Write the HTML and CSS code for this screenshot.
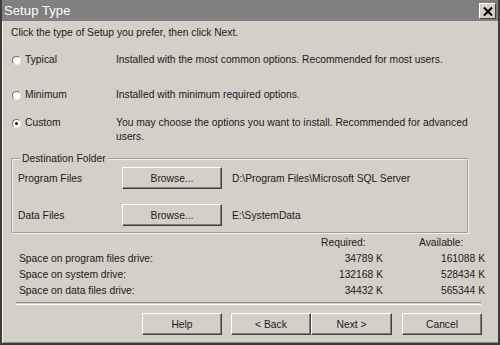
FILE: index.html
```html
<!DOCTYPE html>
<html>
<head>
<meta charset="utf-8">
<link rel="stylesheet" href="styles.css">
</head>
<body>
<div class="window">
  <div class="titlebar">
    <span class="title">Setup Type</span>
    <span class="close"><svg width="10" height="9" viewBox="0 0 10 9"><path d="M1 0.5 L9 8.5 M9 0.5 L1 8.5" stroke="#000" stroke-width="2" fill="none"/></svg></span>
  </div>
  <div class="content">
    <p class="intro">Click the type of Setup you prefer, then click Next.</p>
    <div class="options">
      <div class="opt opt-typical"><span class="radio"></span><span>Typical</span></div>
      <div class="desc opt-typical">Installed with the most common options. Recommended for most users.</div>
      <div class="opt opt-minimum"><span class="radio"></span><span>Minimum</span></div>
      <div class="desc opt-minimum">Installed with minimum required options.</div>
      <div class="opt opt-custom"><span class="radio checked"></span><span>Custom</span></div>
      <div class="desc opt-custom">You may choose the options you want to install. Recommended for advanced users.</div>
    </div>
    <fieldset class="group">
      <legend>Destination Folder</legend>
      <div class="folder-row">
        <span class="flabel">Program Files</span>
        <button class="btn browse">Browse...</button>
        <span class="path">D:\Program Files\Microsoft SQL Server</span>
      </div>
      <div class="folder-row second">
        <span class="flabel">Data Files</span>
        <button class="btn browse">Browse...</button>
        <span class="path">E:\SystemData</span>
      </div>
    </fieldset>
    <div class="space">
      <span></span><span class="hdr">Required:</span><span class="hdr">Available:</span>
      <span>Space on program files drive:</span><span class="num">34789 K</span><span class="num">161088 K</span>
      <span>Space on system drive:</span><span class="num">132168 K</span><span class="num">528434 K</span>
      <span>Space on data files drive:</span><span class="num">34432 K</span><span class="num">565344 K</span>
    </div>
    <div class="separator"></div>
    <div class="buttons">
      <button class="btn action help">Help</button>
      <button class="btn action">&lt; Back</button>
      <button class="btn action next">Next &gt;</button>
      <button class="btn action cancel">Cancel</button>
    </div>
  </div>
</div>
</body>
</html>
```
FILE: styles.css
```css
html, body {
  margin: 0;
  padding: 0;
  background: #d4d0c8;
}
.window {
  box-sizing: border-box;
  width: 500px;
  height: 345px;
  background: #d4d0c8;
  border-left: 2px solid #3c3c3c;
  border-right: 2px solid #3c3c3c;
  border-bottom: 2px solid #3c3c3c;
  box-shadow: inset 1px 0 #f4f3ef, inset 0 -1px #8a8880;
  font-family: "Liberation Sans", Arial, sans-serif;
  font-size: 10.3px;
  color: #1a1a1a;
  overflow: hidden;
}
.titlebar {
  height: 21px;
  background: #808080;
  display: flex;
  align-items: center;
  justify-content: space-between;
  padding: 0 2px 0 2px;
}
.title {
  color: #fff;
  font-size: 13px;
  letter-spacing: 0.1px;
}
.close {
  width: 15px;
  height: 14px;
  background: #d4d0c8;
  border: 1px solid;
  border-color: #fff #404040 #404040 #fff;
  display: flex;
  align-items: center;
  justify-content: center;
  margin-top: 1px;
}
.content {
  padding: 0 9px 0 9px;
}
.intro {
  margin: 5px 0 0 0;
  line-height: 13px;
}
.options {
  display: grid;
  grid-template-columns: 105px 1fr;
  line-height: 14px;
}
.opt {
  display: flex;
  align-items: center;
  gap: 4px;
  padding-left: 1px;
  align-self: start;
  height: 14px;
}
.opt-typical { margin-top: 14px; }
.opt-minimum { margin-top: 21px; }
.opt-custom { margin-top: 14px; }
.desc { padding-right: 0; }
.radio {
  box-sizing: border-box;
  width: 9px;
  height: 9px;
  border-radius: 50%;
  background: #fff;
  border: 1px solid;
  border-color: #707070 #e8e8e8 #e8e8e8 #707070;
  display: flex;
  align-items: center;
  justify-content: center;
}
.radio.checked::after {
  content: "";
  width: 3px;
  height: 3px;
  border-radius: 50%;
  background: #000;
}
.group {
  box-sizing: border-box;
  width: 458px;
  margin: 8px 0 0 0;
  padding: 2px 6px 6px 5px;
  border: 2px groove #f2f1ed;
}
.group legend {
  padding: 0 2px;
  margin-left: 2px;
  line-height: 13px;
}
.folder-row {
  display: grid;
  grid-template-columns: 94px 100px auto;
  column-gap: 10px;
  align-items: center;
}
.folder-row.second { margin-top: 15px; }
.btn {
  box-sizing: border-box;
  font-family: "Liberation Sans", Arial, sans-serif;
  font-size: 10.3px;
  color: #1a1a1a;
  background: #d4d0c8;
  border: 1px solid;
  border-color: #ffffff #404040 #404040 #ffffff;
  box-shadow: inset -1px -1px #808080;
  padding: 0;
  margin: 0;
}
.browse {
  height: 22px;
  width: 100px;
}
.space {
  display: grid;
  grid-template-columns: 266px 62px 66px;
  column-gap: 36px;
  line-height: 16px;
  padding-left: 8px;
  margin-top: 1px;
}
.num { text-align: right; }
.separator {
  margin: 3px 0 0 5px;
  width: 465px;
  height: 1px;
  border-top: 1px solid #8a8880;
  border-bottom: 1px solid #ffffff;
}
.buttons {
  display: flex;
  justify-content: flex-end;
  padding-right: 7px;
  margin-top: 8px;
}
.action {
  width: 80px;
  height: 22px;
}
.help { margin-right: 9px; }
.next { width: 81px; }
.cancel { margin-left: 10px; }
```
